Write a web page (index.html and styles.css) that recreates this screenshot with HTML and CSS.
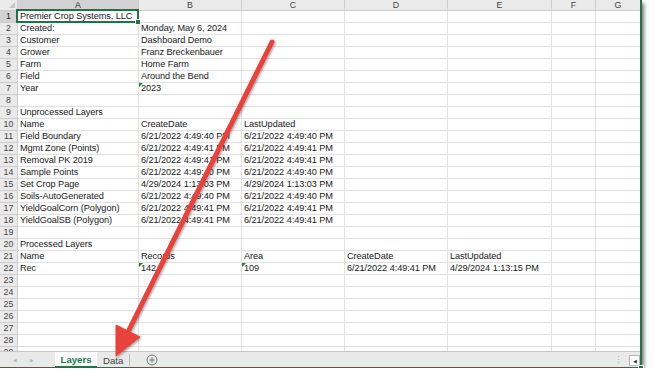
FILE: index.html
```html
<!DOCTYPE html>
<html lang="en">
<head>
  <meta charset="UTF-8">
  <meta name="viewport" content="width=device-width, initial-scale=1.0">
  <title>Premier Crop Systems - Layers</title>
  <link rel="stylesheet" href="styles.css">
</head>
<body>
  <div class="window">
    <div id="sheet" class="sheet"></div>
    <div class="tabbar">
      <div class="nav"><span>&#9664;</span><span>&#9654;</span></div>
      <div class="tab active">Layers</div>
      <div class="tab">Data</div>
      <div class="add">
        <svg width="12" height="12" viewBox="0 0 12 12"><circle cx="6" cy="6" r="5" fill="none" stroke="#777" stroke-width="1"/><path d="M6 3.2v5.6M3.2 6h5.6" stroke="#777" stroke-width="1"/></svg>
      </div>
      <div class="spacer"></div>
      <div class="dots">&#8942;</div>
      <div class="scroll-left">&#9664;</div>
    </div>
  </div>

  <svg class="arrow" width="655" height="376" viewBox="0 0 655 376">
    <defs>
      <filter id="shadow" x="-20%" y="-20%" width="140%" height="140%">
        <feDropShadow dx="1" dy="1.5" stdDeviation="1" flood-color="#000" flood-opacity="0.35"/>
      </filter>
    </defs>
    <g filter="url(#shadow)" fill="#e8433d" stroke="#e8433d">
      <line x1="272" y1="42" x2="129" y2="330" stroke-width="5" stroke-linecap="round"/>
      <polygon points="116,356 116,325 140,337" stroke-width="1" stroke-linejoin="round"/>
    </g>
  </svg>

  <script>
    // Sheet contents, one array per row (columns A..E)
    const rows = [
      ['Premier Crop Systems, LLC'],
      ['Created:', 'Monday, May 6, 2024'],
      ['Customer', 'Dashboard Demo'],
      ['Grower', 'Franz Breckenbauer'],
      ['Farm', 'Home Farm'],
      ['Field', 'Around the Bend'],
      ['Year', '2023'],
      [],
      ['Unprocessed Layers'],
      ['Name', 'CreateDate', 'LastUpdated'],
      ['Field Boundary', '6/21/2022 4:49:40 PM', '6/21/2022 4:49:40 PM'],
      ['Mgmt Zone (Points)', '6/21/2022 4:49:41 PM', '6/21/2022 4:49:41 PM'],
      ['Removal PK 2019', '6/21/2022 4:49:41 PM', '6/21/2022 4:49:41 PM'],
      ['Sample Points', '6/21/2022 4:49:40 PM', '6/21/2022 4:49:40 PM'],
      ['Set Crop Page', '4/29/2024 1:13:03 PM', '4/29/2024 1:13:03 PM'],
      ['Soils-AutoGenerated', '6/21/2022 4:49:40 PM', '6/21/2022 4:49:40 PM'],
      ['YieldGoalCorn (Polygon)', '6/21/2022 4:49:41 PM', '6/21/2022 4:49:41 PM'],
      ['YieldGoalSB (Polygon)', '6/21/2022 4:49:41 PM', '6/21/2022 4:49:41 PM'],
      [],
      ['Processed Layers'],
      ['Name', 'Records', 'Area', 'CreateDate', 'LastUpdated'],
      ['Rec', '142', '109', '6/21/2022 4:49:41 PM', '4/29/2024 1:13:15 PM']
    ];
    // cells stored as text, shown with the green corner mark
    const flagged = ['B7', 'B22', 'C22'];
    const letters = ['A', 'B', 'C', 'D', 'E', 'F', 'G'];
    const sheet = document.getElementById('sheet');

    function addCell(cls, text) {
      const div = document.createElement('div');
      div.className = 'cell ' + cls;
      div.textContent = text || '';
      sheet.appendChild(div);
      return div;
    }

    addCell('head corner');
    letters.forEach(l => addCell('head col' + (l === 'A' ? ' sel' : ''), l));

    for (let r = 1; r <= 29; r++) {
      addCell('head row' + (r === 1 ? ' sel' : ''), r);
      const data = rows[r - 1] || [];
      letters.forEach((l, i) => {
        const c = addCell('', data[i]);
        if (flagged.includes(l + r)) c.classList.add('flag');
        if (l + r === 'A1') c.classList.add('active');
      });
    }
  </script>
</body>
</html>
```

FILE: styles.css
```css
body { margin: 0; background: #fff; font-family: "Liberation Sans", Arial, sans-serif; }
.window { width: 641px; position: relative; box-shadow: 3px 3px 4px rgba(0,0,0,0.55); }
.sheet { display: grid; grid-template-columns: 18px 121px 103px 103px 103px 104px 44px 45px; grid-template-rows: 11px; grid-auto-rows: 12px; height: 351px; overflow: hidden; font-size: 9.2px; letter-spacing: -0.08px; }
.cell { position: relative; box-sizing: border-box; border-right: 1px solid #e1e1e1; border-bottom: 1px solid #e1e1e1; padding-left: 2px; line-height: 11px; white-space: nowrap; color: #1a1a1a; }
.head { background: #eaeaea; color: #444; text-align: center; padding: 0; border-color: #cdcdcd; font-size: 8.8px; letter-spacing: 0; }
.head.sel { background: #d2d2d2; color: #262626; }
.head.col { line-height: 10px; }
.corner::after { content: ''; position: absolute; right: 2px; bottom: 2px; border-left: 6px solid transparent; border-bottom: 6px solid #c4c4c4; }
.active { z-index: 2; }
.active::after { content: ''; position: absolute; left: -2px; top: -2px; right: -1px; bottom: -1px; border: 2px solid #217346; }
.active::before { content: ''; position: absolute; right: -3px; bottom: -3px; width: 4px; height: 4px; background: #217346; border: 1px solid #fff; z-index: 3; }
.flag::before { content: ''; position: absolute; left: 0; top: 0; border-top: 4px solid #1c7a3c; border-right: 4px solid transparent; }

.tabbar { height: 16px; background: #e9e9e9; border-top: 1px solid #c6c6c6; display: flex; align-items: stretch; font-size: 9.6px; color: #444; }
.nav { width: 55px; display: flex; align-items: center; gap: 13px; padding-left: 13px; box-sizing: border-box; font-size: 5px; color: #b8b8b8; }
.tab { display: flex; align-items: center; padding: 0 6px; }
.tab.active { width: 42px; box-sizing: border-box; justify-content: center; background: #fff; color: #217346; font-weight: bold; border-bottom: 2px solid #217346; }
.tab + .tab { width: 33px; box-sizing: border-box; border-right: 1px solid #bdbdbd; margin: 2px 0; }
.add { display: flex; align-items: center; padding-left: 16px; }
.spacer { flex: 1; }
.dots { display: flex; align-items: center; color: #b0b0b0; font-size: 9px; padding-right: 6px; }
.scroll-left { width: 9px; margin: 3px 1px 2px 0; background: #fff; border: 1px solid #b8b8b8; font-size: 5px; color: #333; display: flex; align-items: center; justify-content: center; }

.arrow { position: absolute; left: 0; top: 0; pointer-events: none; }
```
